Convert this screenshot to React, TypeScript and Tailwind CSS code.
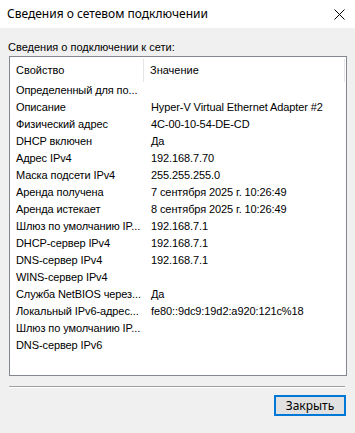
import React from "react";

const rows: [string, string][] = [
  ["Определенный для по...", ""],
  ["Описание", "Hyper-V Virtual Ethernet Adapter #2"],
  ["Физический адрес", "4C-00-10-54-DE-CD"],
  ["DHCP включен", "Да"],
  ["Адрес IPv4", "192.168.7.70"],
  ["Маска подсети IPv4", "255.255.255.0"],
  ["Аренда получена", "7 сентября 2025 г. 10:26:49"],
  ["Аренда истекает", "8 сентября 2025 г. 10:26:49"],
  ["Шлюз по умолчанию IP...", "192.168.7.1"],
  ["DHCP-сервер IPv4", "192.168.7.1"],
  ["DNS-сервер IPv4", "192.168.7.1"],
  ["WINS-сервер IPv4", ""],
  ["Служба NetBIOS через...", "Да"],
  ["Локальный IPv6-адрес...", "fe80::9dc9:19d2:a920:121c%18"],
  ["Шлюз по умолчанию IP...", ""],
  ["DNS-сервер IPv6", ""],
];

export default function App() {
  return (
    <div
      className="w-[355px] h-[433px] bg-[#f0f0f0] flex flex-col text-black"
      style={{ fontFamily: '"Liberation Sans", Arial, sans-serif' }}
    >
      <div className="h-[28px] bg-white flex items-center justify-between pl-[7px] pr-[10px] shrink-0">
        <span
          className="text-[12px]"
          style={{ fontFamily: '"Noto Sans", "Open Sans", sans-serif' }}
        >
          Сведения о сетевом подключении
        </span>
        <svg width="11" height="11" viewBox="0 0 11 11" className="mt-[1px]">
          <path d="M0.5 0.5 L10.5 10.5 M10.5 0.5 L0.5 10.5" stroke="#000" strokeWidth="1" />
        </svg>
      </div>
      <div className="flex flex-col px-[9px] pt-[12px] text-[11px]">
        <div className="pl-0 h-[14px] leading-[14px] -ml-[1px]">Сведения о подключении к сети:</div>
        <div className="mt-[2px] w-[338px] h-[320px] border border-[#828790] bg-white flex flex-col pt-[2px]">
          <div className="h-[23px] flex items-center shrink-0">
            <div className="w-[134px] h-full pl-[6px] flex items-center border-r border-[#e5e5e5]">Свойство</div>
            <div className="flex-1 h-full pl-[6px] flex items-center border-r border-[#e5e5e5] mr-[1px]">Значение</div>
          </div>
          <div className="flex flex-col tracking-[-0.1px]">
            {rows.map(([k, v], i) => (
              <div key={i} className="h-[17px] flex items-center whitespace-nowrap">
                <div className="w-[135px] pl-[6px]">{k}</div>
                <div className="flex-1 pl-[6px]">{v}</div>
              </div>
            ))}
          </div>
        </div>
        <div className="mt-[10px] h-[2px] w-[336px] border-t border-[#a0a0a0] border-b border-b-white" />
        <div className="flex justify-end mt-[7px]">
          <button className="w-[72px] h-[21px] border-2 border-[#0078d7] bg-[#e1e1e1] text-[12px] flex items-center justify-center"
            style={{ fontFamily: '"Noto Sans", "Open Sans", sans-serif' }}>
            Закрыть
          </button>
        </div>
      </div>
    </div>
  );
}
